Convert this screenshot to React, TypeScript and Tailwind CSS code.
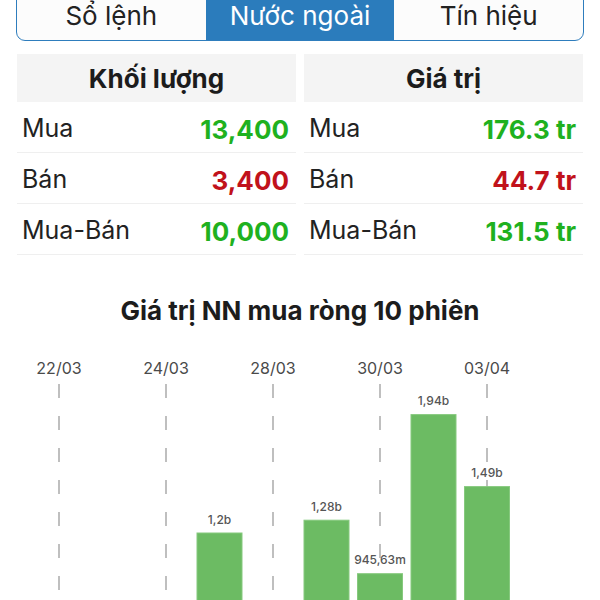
import React from 'react';

const tabs = ['Sổ lệnh', 'Nước ngoài', 'Tín hiệu'];

const volumeRows = [
  { label: 'Mua', value: '13,400', color: 'text-[#1fb11f]' },
  { label: 'Bán', value: '3,400', color: 'text-[#c1121b]' },
  { label: 'Mua-Bán', value: '10,000', color: 'text-[#1fb11f]' },
];

const valueRows = [
  { label: 'Mua', value: '176.3 tr', color: 'text-[#1fb11f]' },
  { label: 'Bán', value: '44.7 tr', color: 'text-[#c1121b]' },
  { label: 'Mua-Bán', value: '131.5 tr', color: 'text-[#1fb11f]' },
];

// net foreign buy value per session, in billions (null = nothing to draw)
const sessions: { date?: string; value: number | null; label?: string }[] = [
  { value: null },
  { date: '22/03', value: null },
  { value: null },
  { date: '24/03', value: null },
  { value: 1.2, label: '1,2b' },
  { date: '28/03', value: null },
  { value: 1.28, label: '1,28b' },
  { date: '30/03', value: 0.94563, label: '945,63m' },
  { value: 1.94, label: '1,94b' },
  { date: '03/04', value: 1.49, label: '1,49b' },
];

const SLOT = 53.5;
const BAR_W = 45;
const BASE = 400; // baseline sits below the visible area
const PX_PER_B = 160;

function NetBuyChart() {
  return (
    <svg width={600} height={276} className="block" style={{ fontFamily: 'Inter, "Liberation Sans", sans-serif' }}>
      {sessions.map((s, i) => {
        const cx = 5.5 + SLOT * i;
        if (!s.date) return null;
        return (
          <g key={'d' + i}>
            <text x={cx} y={49} textAnchor="middle" fontSize={16} fill="#4a4a4a">
              {s.date}
            </text>
            <line x1={cx} y1={59} x2={cx} y2={276} stroke="#ababab" strokeWidth={1.5} strokeDasharray="14 18" />
          </g>
        );
      })}
      {sessions.map((s, i) => {
        if (s.value == null) return null;
        const cx = 5.5 + SLOT * i;
        const h = s.value * PX_PER_B;
        const top = BASE - h;
        return (
          <g key={'b' + i}>
            <rect x={cx - BAR_W / 2} y={top} width={BAR_W} height={h} fill="#6cbb63" stroke="#86c97e" strokeWidth={1} />
            <text x={cx} y={top - 9.5} textAnchor="middle" fontSize={12} fontWeight={500} fill="#555">
              {s.label}
            </text>
          </g>
        );
      })}
    </svg>
  );
}

function StatTable({ title, rows }: { title: string; rows: typeof volumeRows }) {
  return (
    <div className="flex flex-col">
      <div className="h-[48px] bg-[#f4f4f4] flex items-center justify-center text-[26px] font-bold text-[#1c1c1c]">
        {title}
      </div>
      {rows.map((r) => (
        <div key={r.label} className="h-[51px] border-b border-[#efefef] flex items-center justify-between pt-[4px] pl-[5px] pr-[7px]">
          <span className="text-[25px] text-[#222]">{r.label}</span>
          <span className={`text-[26px] font-bold ${r.color}`}>{r.value}</span>
        </div>
      ))}
    </div>
  );
}

export default function App() {
  return (
    <div className="w-[600px] h-[600px] overflow-hidden bg-white" style={{ fontFamily: 'Inter, "Liberation Sans", sans-serif' }}>
      <div className="mx-[16px] -mt-[10px] h-[51px] flex border-[1.5px] border-[#2e7dbd] rounded-b-[9px] overflow-hidden bg-[#fcfcfc]">
        {tabs.map((t, i) => (
          <div
            key={t}
            className={`flex-1 flex items-center justify-center text-[26px] ${
              i === 1 ? 'bg-[#2b7cbc] text-white' : 'text-[#222]'
            }`}
          >
            {t}
          </div>
        ))}
      </div>

      <div className="mx-[17px] mt-[13px] grid grid-cols-2 gap-[8px]">
        <StatTable title="Khối lượng" rows={volumeRows} />
        <StatTable title="Giá trị" rows={valueRows} />
      </div>

      <div className="mt-[40px] h-[30px] flex items-center justify-center text-[26px] font-bold text-[#1c1c1c]">
        Giá trị NN mua ròng 10 phiên
      </div>
      <NetBuyChart />
    </div>
  );
}
